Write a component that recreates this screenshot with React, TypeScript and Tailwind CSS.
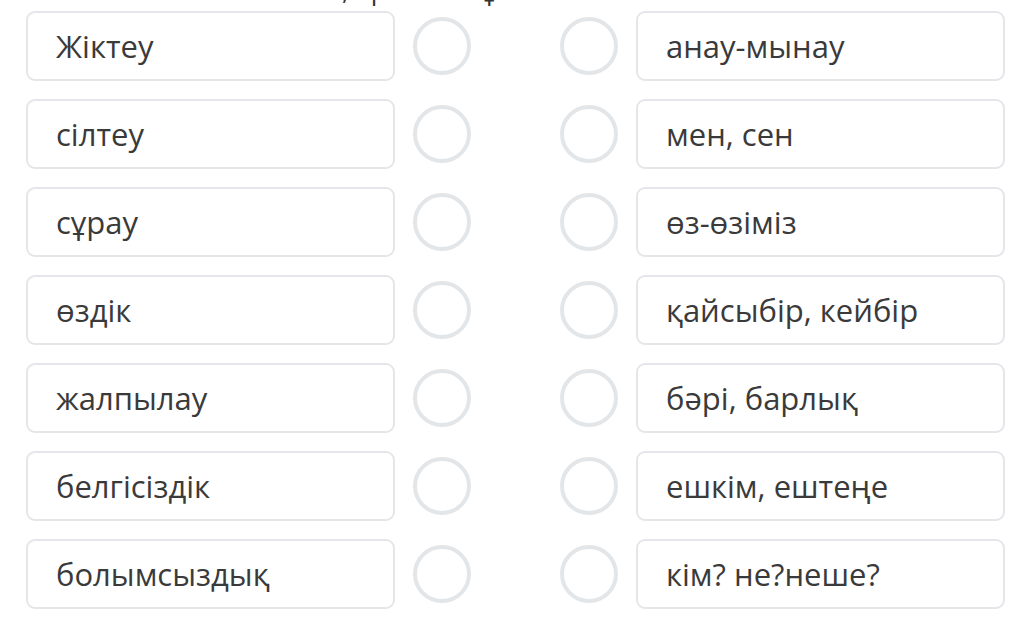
import React from "react";

const left = ["Жіктеу", "сілтеу", "сұрау", "өздік", "жалпылау", "белгісіздік", "болымсыздық"];
const right = [
  "анау-мынау",
  "мен, сен",
  "өз-өзіміз",
  "қайсыбір, кейбір",
  "бәрі, барлық",
  "ешкім, ештеңе",
  "кім? не?неше?",
];

function Option({ label }: { label: string }) {
  return (
    <div className="flex h-[70px] w-[369px] items-center rounded-[9px] border-2 border-[#e4e6e9] bg-white pl-[28px] text-[31px] text-[#3a3a3a]">
      {label}
    </div>
  );
}

function Dot() {
  return <div className="h-[58px] w-[58px] shrink-0 rounded-full border-[4px] border-[#e3e6e9] bg-white" />;
}

export default function App() {
  return (
    <div
      className="relative h-[618px] w-[1030px] overflow-hidden bg-white"
      style={{ fontFamily: '"Open Sans", "Noto Sans", sans-serif' }}
    >
      {/* heading above is cut off, only descenders peek through */}
      <div className="absolute left-0 top-[-27px] flex text-[26px] leading-[34px] text-[#333]">
        <span className="ml-[342px]">,</span>
        <span className="ml-[22px]">р</span>
        <span className="ml-[96px]">ұ</span>
      </div>
      <div className="flex flex-col gap-[18px] pl-[26px] pt-[11px]">
        {left.map((l, i) => (
          <div key={l} className="flex items-center">
            <Option label={l} />
            <div className="ml-[18px]">
              <Dot />
            </div>
            <div className="ml-[89px]">
              <Dot />
            </div>
            <div className="ml-[18px]">
              <Option label={right[i]} />
            </div>
          </div>
        ))}
      </div>
    </div>
  );
}
